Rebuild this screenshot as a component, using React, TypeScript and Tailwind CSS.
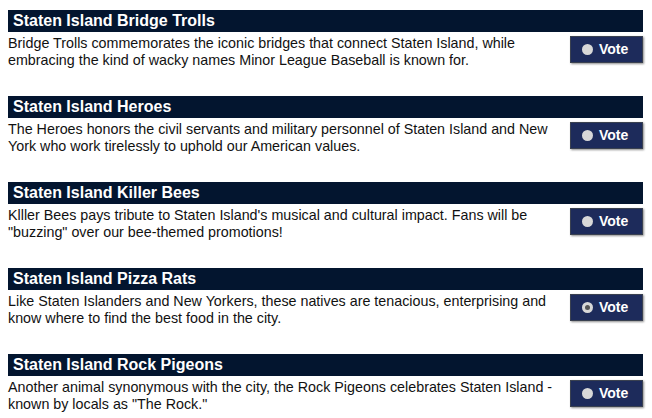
import React from 'react'

const teams = [
  {
    name: 'Staten Island Bridge Trolls',
    text: 'Bridge Trolls commemorates the iconic bridges that connect Staten Island, while embracing the kind of wacky names Minor League Baseball is known for.',
  },
  {
    name: 'Staten Island Heroes',
    text: 'The Heroes honors the civil servants and military personnel of Staten Island and New York who work tirelessly to uphold our American values.',
  },
  {
    name: 'Staten Island Killer Bees',
    text: 'Klller Bees pays tribute to Staten Island\'s musical and cultural impact. Fans will be "buzzing" over our bee-themed promotions!',
  },
  {
    name: 'Staten Island Pizza Rats',
    text: 'Like Staten Islanders and New Yorkers, these natives are tenacious, enterprising and know where to find the best food in the city.',
    selected: true,
  },
  {
    name: 'Staten Island Rock Pigeons',
    text: 'Another animal synonymous with the city, the Rock Pigeons celebrates Staten Island - known by locals as "The Rock."',
  },
]

function VoteButton({ selected }: { selected?: boolean }) {
  return (
    <button className="flex h-[27px] w-[73px] items-center gap-[6px] border border-[#3a4150] bg-[#1d2b5b] pl-[11px] shadow-[1px_1px_2px_rgba(0,0,0,0.45)]">
      <span className="flex h-[11px] w-[11px] items-center justify-center rounded-full bg-[#d8d8d8]">
        {selected && <span className="h-[5px] w-[5px] rounded-full bg-[#555]" />}
      </span>
      <span className="text-[14px] font-bold text-white">Vote</span>
    </button>
  )
}

export default function App() {
  return (
    <div className="h-[418px] w-[652px] overflow-hidden bg-white pl-[8px] pt-[10px] font-['Liberation_Sans',Arial,sans-serif]">
      {teams.map((t) => (
        <div key={t.name} className="h-[86px] w-[635px]">
          <div className="flex h-[22px] items-center bg-[#03152f] pl-[5px] text-[16px] font-bold text-white">
            {t.name}
          </div>
          <div className="flex items-start justify-between">
            <p className="w-[555px] pt-[3px] text-[14.3px] leading-[17px] text-[#111]">{t.text}</p>
            <div className="pt-[4px]">
              <VoteButton selected={t.selected} />
            </div>
          </div>
        </div>
      ))}
    </div>
  )
}
